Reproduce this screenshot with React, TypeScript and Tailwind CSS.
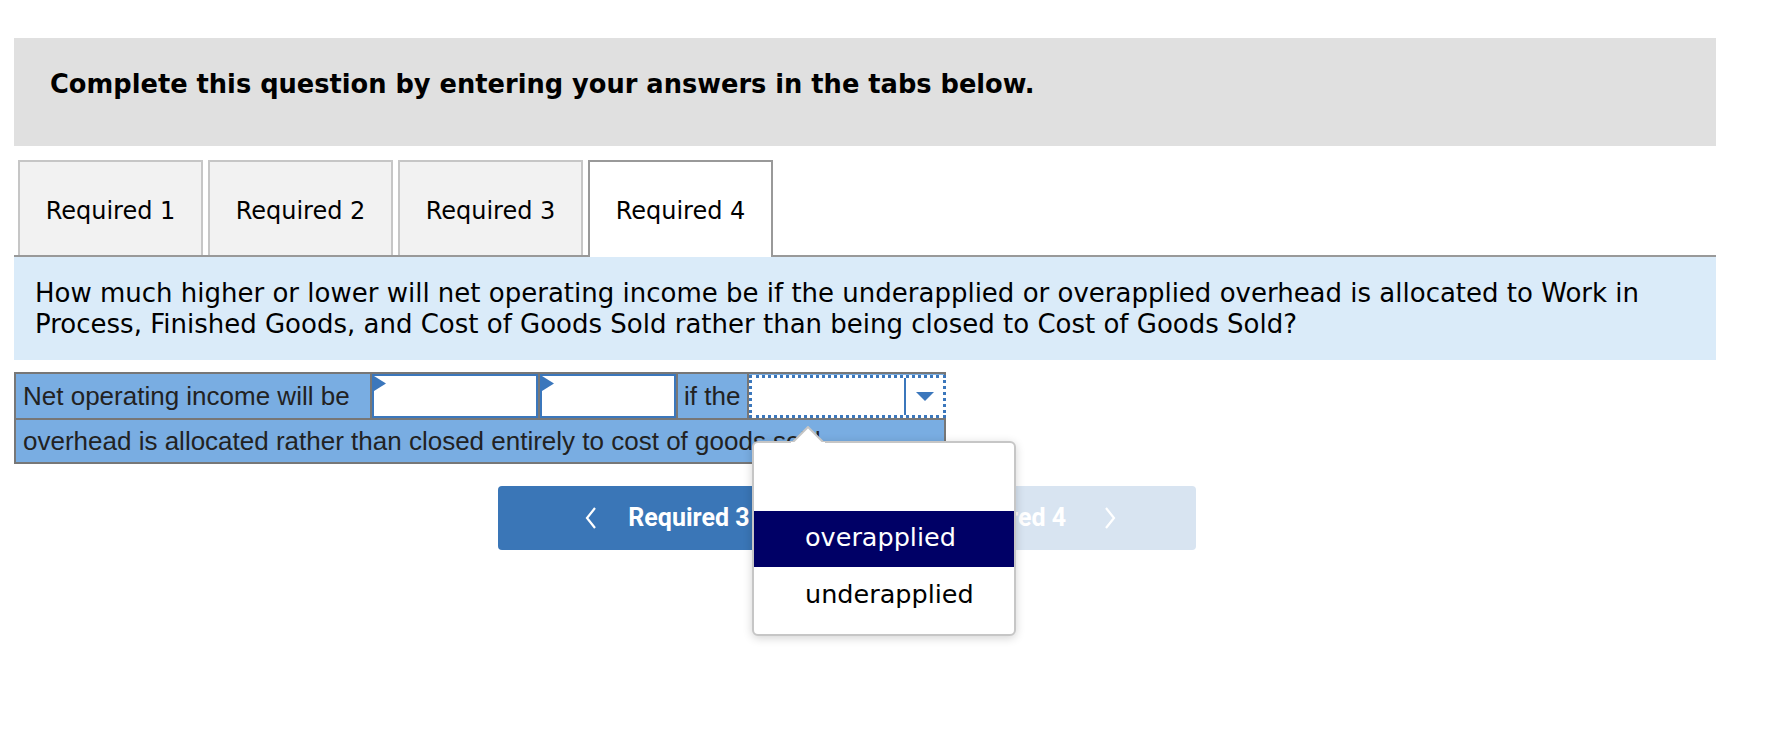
const verdana = { fontFamily: '"DejaVu Sans", Verdana, sans-serif' };

const tabs = ['Required 1', 'Required 2', 'Required 3', 'Required 4'];

function Flag() {
  return (
    <svg className="absolute left-0 top-0" width="12" height="15" viewBox="0 0 12 15">
      <polygon points="0,0 12,7.5 0,15" fill="#3b77bc" />
    </svg>
  );
}

function AnswerTable() {
  return (
    <div className="mt-[12px] w-[932px] bg-[#79ade2] border-2 border-[#777] text-[26px] text-[#222] font-['Liberation_Sans',Arial,sans-serif]">
      <div className="flex h-[44px]">
        <div className="w-[354px] shrink-0 flex items-center pl-[7px] whitespace-nowrap">Net operating income will be</div>
        <div className="w-[2px] shrink-0 bg-[#777]" />
        <div className="relative w-[166px] shrink-0 bg-white border-2 border-[#3b77bc]">
          <Flag />
        </div>
        <div className="w-[2px] shrink-0 bg-[#777]" />
        <div className="relative w-[136px] shrink-0 bg-white border-2 border-[#3b77bc]">
          <Flag />
        </div>
        <div className="w-[2px] shrink-0 bg-[#777]" />
        <div className="w-[69px] shrink-0 flex items-center pl-[6px] whitespace-nowrap">if the</div>
        <div className="w-[2px] shrink-0 bg-[#777]" />
        <div className="w-[197px] shrink-0 -mr-[4px] mt-[1px] bg-white border-[3px] border-dotted border-[#3b77bc] flex items-stretch justify-end">
          <div className="w-[2px] bg-[#3b77bc]" />
          <div className="w-[37px] flex items-center justify-center">
            <svg width="18" height="9" viewBox="0 0 18 9">
              <polygon points="0,0 18,0 9,9" fill="#3b77bc" />
            </svg>
          </div>
        </div>
      </div>
      <div className="h-[2px] bg-[#777]" />
      <div className="h-[42px] flex items-center pl-[7px] whitespace-nowrap">
        overhead is allocated rather than closed entirely to cost of goods sold.
      </div>
    </div>
  );
}

function Chevron({ dir }: { dir: 'left' | 'right' }) {
  return (
    <svg width="12" height="24" viewBox="0 0 12 24">
      <polyline
        points={dir === 'left' ? '10,2 2,12 10,22' : '2,2 10,12 2,22'}
        fill="none"
        stroke="white"
        strokeWidth="2.2"
      />
    </svg>
  );
}

function Popup() {
  return (
    <div
      className="absolute left-[752px] top-[441px] w-[264px] h-[195px] bg-white border-2 border-[#c6c6c6] rounded-[6px] shadow-[0_2px_10px_rgba(0,0,0,0.18)] pt-[12px] text-[25.5px] text-black"
      style={verdana}
    >
      <svg className="absolute left-[37px] -top-[17px]" width="34" height="19" viewBox="0 0 34 19">
        <polygon points="0,18 17,1 34,18" fill="white" stroke="#c6c6c6" strokeWidth="2" />
        <rect x="0" y="16" width="34" height="3" fill="white" />
      </svg>
      <div className="h-[56px]" />
      <div className="h-[56px] bg-[#000066] text-white flex items-center pl-[51px] pb-[3px]">overapplied</div>
      <div className="h-[56px] flex items-center pl-[51px] pb-[2px]">underapplied</div>
    </div>
  );
}

export default function App() {
  return (
    <div className="relative w-[1766px] h-[756px] bg-white overflow-hidden">
      <div className="ml-[14px] w-[1702px] pt-[38px]">
        <div className="h-[108px] bg-[#e0e0e0] pt-[32px] pl-[36px]">
          <h1 className="text-[25.7px] leading-[29px] font-bold text-black" style={verdana}>
            Complete this question by entering your answers in the tabs below.
          </h1>
        </div>

        <div className="mt-[14px] flex gap-[5px] pl-[4px] border-b-2 border-[#999] h-[97px]" style={verdana}>
          {tabs.map((t, i) =>
            i === 3 ? (
              <div
                key={t}
                className="w-[185px] h-[97px] bg-white border-2 border-b-0 border-[#999] flex items-center justify-center pt-[3px] text-[24px] text-black"
              >
                {t}
              </div>
            ) : (
              <div
                key={t}
                className="w-[185px] h-[95px] bg-[#f2f2f2] border-2 border-b-0 border-[#c6c6c6] flex items-center justify-center pt-[4px] text-[24px] text-black"
              >
                {t}
              </div>
            )
          )}
        </div>

        <div className="bg-[#daebf9] pt-[21px] pb-[20px] px-[21px] text-[26px] leading-[31px] text-black" style={verdana}>
          How much higher or lower will net operating income be if the underapplied or overapplied overhead is allocated to Work in
          <br />
          Process, Finished Goods, and Cost of Goods Sold rather than being closed to Cost of Goods Sold?
        </div>

        <AnswerTable />

        <div className="mt-[22px] ml-[484px] flex gap-[4px] font-['Roboto',sans-serif] font-bold text-[25px] text-white">
          <div className="w-[347px] h-[64px] rounded-[4px] bg-[#3a76b7] flex items-center justify-center gap-[31px] pr-[8px]">
            <Chevron dir="left" />
            <span>Required 3</span>
          </div>
          <div className="w-[347px] h-[64px] rounded-[4px] bg-[#d8e4f1] flex items-center justify-center gap-[38px] pl-[16px]">
            <span>Required 4</span>
            <Chevron dir="right" />
          </div>
        </div>
      </div>

      <Popup />
    </div>
  );
}
